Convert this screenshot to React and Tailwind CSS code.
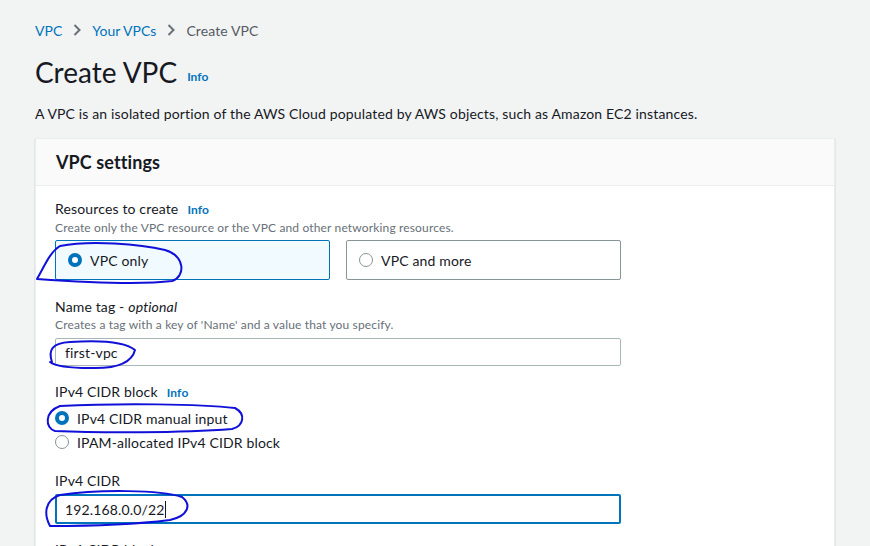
import React from "react";

const FONT = { fontFamily: "Lato, 'Open Sans', sans-serif" };

function Chevron() {
  return (
    <svg width="10" height="14" viewBox="0 0 10 14" className="mx-[10px]">
      <path d="M2.5 2 L7.5 7 L2.5 12" fill="none" stroke="#687078" strokeWidth="2" />
    </svg>
  );
}

function RadioOn() {
  return <span className="inline-block w-[14px] h-[14px] rounded-full border-[4px] border-[#0073bb] bg-white shrink-0" />;
}
function RadioOff() {
  return <span className="inline-block w-[14px] h-[14px] rounded-full border-[1.5px] border-[#879596] bg-white shrink-0" />;
}

export default function App() {
  return (
    <div className="relative w-[870px] h-[546px] overflow-hidden bg-[#f2f3f3] text-[#16191f]" style={FONT}>
      <div className="px-[35px] pt-[20px]">
        <div className="flex items-center h-[20px] text-[14px]">
          <span className="text-[#0073bb]">VPC</span>
          <Chevron />
          <span className="text-[#0073bb]">Your VPCs</span>
          <Chevron />
          <span className="text-[#545b64] tracking-[0.1px]">Create VPC</span>
        </div>
        <div className="mt-[14px] flex items-end h-[36px]">
          <h1 className="text-[28px] leading-[36px] font-normal">Create VPC</h1>
          <span className="ml-[10px] mb-[4px] text-[12px] font-bold text-[#0073bb]">Info</span>
        </div>
        <p className="mt-[14px] text-[14px] leading-[20px] tracking-[0.15px]">
          A VPC is an isolated portion of the AWS Cloud populated by AWS objects, such as Amazon EC2 instances.
        </p>
        <div className="mt-[14px] bg-white border border-[#eaeded] shadow-[0_1px_1px_0_rgba(0,28,36,0.3)]">
          <div className="h-[47px] bg-[#fafafa] border-b border-[#eaeded] flex items-center px-[20px]">
            <h2 className="text-[18px] font-bold leading-[22px] tracking-[0.1px]">VPC settings</h2>
          </div>
          <div className="px-[19px] pt-[13px] pb-[20px] tracking-[0.15px]">
            <div className="w-[566px]">
              <div className="flex items-baseline h-[20px] text-[14px] leading-[20px]">
                <span>Resources to create</span>
                <span className="ml-[9px] text-[12px] font-bold text-[#0073bb]">Info</span>
              </div>
              <div className="mt-[1px] text-[12px] leading-[16px] text-[#687078]">
                Create only the VPC resource or the VPC and other networking resources.
              </div>
              <div className="mt-[4px] flex gap-[16px]">
                <div className="w-[275px] h-[40px] flex items-center gap-[8px] px-[12px] bg-[#f1faff] border border-[#0073bb] rounded-[2px] text-[14px]">
                  <RadioOn />
                  <span>VPC only</span>
                </div>
                <div className="w-[275px] h-[40px] flex items-center gap-[8px] px-[12px] bg-white border border-[#879596] rounded-[2px] text-[14px]">
                  <RadioOff />
                  <span>VPC and more</span>
                </div>
              </div>

              <div className="mt-[17px] h-[20px] text-[14px] leading-[20px]">
                Name tag - <i>optional</i>
              </div>
              <div className="text-[12px] leading-[16px] text-[#687078]">
                Creates a tag with a key of 'Name' and a value that you specify.
              </div>
              <div className="mt-[5px] h-[28px] border border-[#aab7b8] rounded-[2px] flex items-center px-[9px] text-[14px]">
                first-vpc
              </div>

              <div className="mt-[16px] flex items-baseline h-[20px] text-[14px] leading-[20px]">
                <span>IPv4 CIDR block</span>
                <span className="ml-[9px] text-[12px] font-bold text-[#0073bb]">Info</span>
              </div>
              <div className="mt-[6px] flex items-center gap-[8px] h-[20px] text-[14px]">
                <RadioOn />
                <span>IPv4 CIDR manual input</span>
              </div>
              <div className="mt-[4px] flex items-center gap-[8px] h-[20px] text-[14px]">
                <RadioOff />
                <span>IPAM-allocated IPv4 CIDR block</span>
              </div>

              <div className="mt-[19px] h-[20px] text-[14px] leading-[20px]">IPv4 CIDR</div>
              <div className="mt-[3px] h-[30px] border-2 border-[#0073bb] rounded-[2px] flex items-center px-[8px] text-[14px]">
                <span>192.168.0.0/22</span>
                <span className="inline-block w-px h-[17px] bg-[#16191f]" />
              </div>

              <div className="mt-[16px] h-[20px] text-[14px] leading-[20px] text-[#16191f]">IPv6 CIDR block</div>
            </div>
          </div>
        </div>
      </div>

      <svg className="absolute inset-0 pointer-events-none" width="870" height="546" viewBox="0 0 870 546">
        <g fill="none" stroke="#1010d8" strokeWidth="2" strokeLinecap="round" strokeLinejoin="round">
          <path d="M37 279 C45 265, 50 252, 60 246 C90 240, 140 244, 165 250 C185 256, 186 276, 172 281 C140 285, 80 282, 37 279" />
          <path d="M52 362 C48 350, 52 343, 70 342 C100 340, 125 342, 135 350 C132 362, 120 369, 90 368 C70 368, 55 366, 50 362" />
          <path d="M60 406 C120 403, 200 404, 235 408 C246 414, 244 426, 232 429 C180 433, 100 433, 55 431 C45 428, 44 412, 60 406" />
          <path d="M50 526 C44 515, 44 500, 60 495 C100 489, 160 490, 182 497 C192 505, 188 516, 170 520 C130 525, 90 526, 50 526" />
        </g>
      </svg>
    </div>
  );
}
